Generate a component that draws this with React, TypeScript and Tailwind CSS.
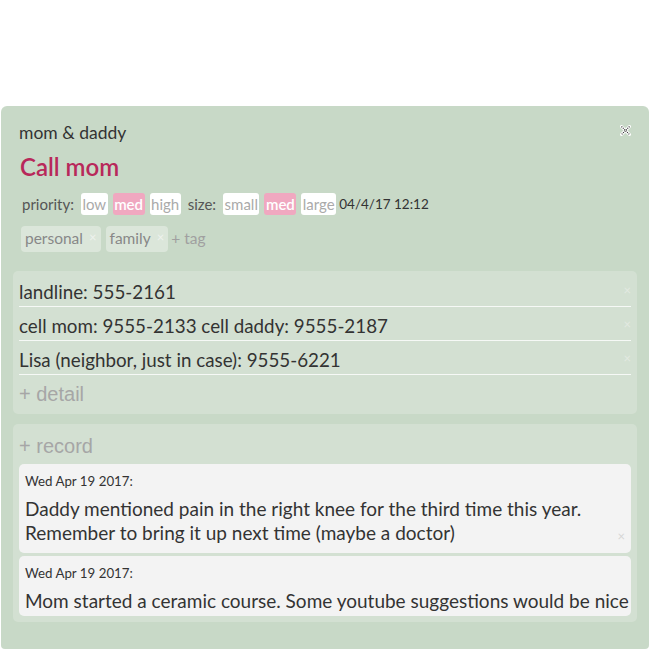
import React from "react";

const font = { fontFamily: "Lato, 'Open Sans', sans-serif" };
const arial = { fontFamily: "'Liberation Sans', Arial, sans-serif" };

function X({ className = "" }: { className?: string }) {
  return <span className={"text-[13px] leading-none " + className}>×</span>;
}

const details = [
  "landline: 555-2161",
  "cell mom: 9555-2133 cell daddy: 9555-2187",
  "Lisa (neighbor, just in case): 9555-6221",
];

const records = [
  {
    date: "Wed Apr 19 2017:",
    text: "Daddy mentioned pain in the right knee for the third time this year. Remember to bring it up next time (maybe a doctor)",
  },
  {
    date: "Wed Apr 19 2017:",
    text: "Mom started a ceramic course. Some youtube suggestions would be nice",
  },
];

export default function App() {
  const pill = "rounded-[3px] px-[1.5px] leading-[22px]";
  return (
    <div className="w-[650px] h-[650px] bg-white pt-[106px] pl-[1px] pr-[1px]" style={font}>
      <div className="h-[543px] bg-[#c8d9c7] rounded-t-[6px] rounded-b-[4px] px-[12px] pt-[16px] relative overflow-hidden">
        <button className="absolute right-[18px] top-[18px] w-[12px] h-[12px] flex items-center justify-center">
          <svg width="11" height="11" viewBox="0 0 11 11">
            <path d="M1.5 1.5 L9.5 9.5 M9.5 1.5 L1.5 9.5" stroke="#fff" strokeWidth="3" strokeLinecap="round" />
            <path d="M1.5 1.5 L9.5 9.5 M9.5 1.5 L1.5 9.5" stroke="#333" strokeWidth="1.2" strokeDasharray="1 1" />
          </svg>
        </button>
        <div className="pl-[6px] text-[17.5px] leading-[22px] text-[#333]">mom &amp; daddy</div>
        <div className="pl-[7px] mt-[8px] text-[24px] leading-[30px] font-semibold text-[#b8285a]">Call mom</div>
        <div className="pl-[9px] mt-[11px] flex items-center gap-[5px] text-[15px] text-[#555]">
          <span className="mr-[2px]">priority:</span>
          <span className={pill + " bg-white text-[#aaa]"}>low</span>
          <span className={pill + " bg-[#f0a8c0] text-white font-semibold"}>med</span>
          <span className={pill + " bg-white text-[#aaa]"}>high</span>
          <span className="ml-[2px] mr-[2px]">size:</span>
          <span className={pill + " bg-white text-[#aaa]"}>small</span>
          <span className={pill + " bg-[#f0a8c0] text-white font-semibold"}>med</span>
          <span className={pill + " bg-white text-[#aaa]"}>large</span>
          <span className="ml-[-2px] text-[13.5px] text-[#333]">04/4/17 12:12</span>
        </div>
        <div className="pl-[8px] mt-[10px] flex items-center gap-[5px] text-[15.5px]">
          {["personal", "family"].map((t) => (
            <span key={t} className="bg-[#dbe6da] rounded-[4px] pl-[4px] pr-[4px] h-[26px] flex items-center gap-[6px] text-[#888]">
              {t}
              <X className="self-start mt-[5px] text-[#eef2ee]" />
            </span>
          ))}
          <span className="text-[#a0a0a0] ml-[-2px]">+ tag</span>
        </div>

        <div className="mt-[19px] bg-[#d3e0d2] rounded-[5px] px-[6px] pt-[2px] pb-[2px]">
          {details.map((d) => (
            <div key={d} className="flex items-start justify-between border-b border-[#f6f9f6] h-[34px] pt-[8px] text-[18.8px] leading-[22px] text-[#333]">
              <span>{d}</span>
              <X className="mt-[3px] text-[#e2e9e1]" />
            </div>
          ))}
          <div className="h-[37px] flex items-center pt-[1px] text-[20px] text-[#a6a6a6]" style={arial}>
            + detail
          </div>
        </div>

        <div className="mt-[10px] bg-[#d3e0d2] rounded-[5px] px-[6px] pb-[6px]">
          <div className="h-[40px] flex items-center pt-[4px] text-[20px] text-[#a6a6a6]" style={arial}>
            + record
          </div>
          <div className="flex flex-col gap-[3px]">
            {records.map((r, i) => (
              <div key={i} className={"bg-[#f3f3f3] rounded-[5px] px-[6px] pt-[7px] relative " + (i === 0 ? "pb-[8px]" : "pb-[3px]")}>
                <div className="text-[13.3px] leading-[20px] text-[#333]">{r.date}</div>
                <div className={"mt-[6px] text-[19px] leading-[24px] text-[#333] " + (i === 1 ? "whitespace-nowrap" : "")}>{r.text}</div>
                {i === 0 && <X className="absolute right-[6px] bottom-[10px] text-[#d6d6d6]" />}
              </div>
            ))}
          </div>
        </div>
      </div>
    </div>
  );
}
